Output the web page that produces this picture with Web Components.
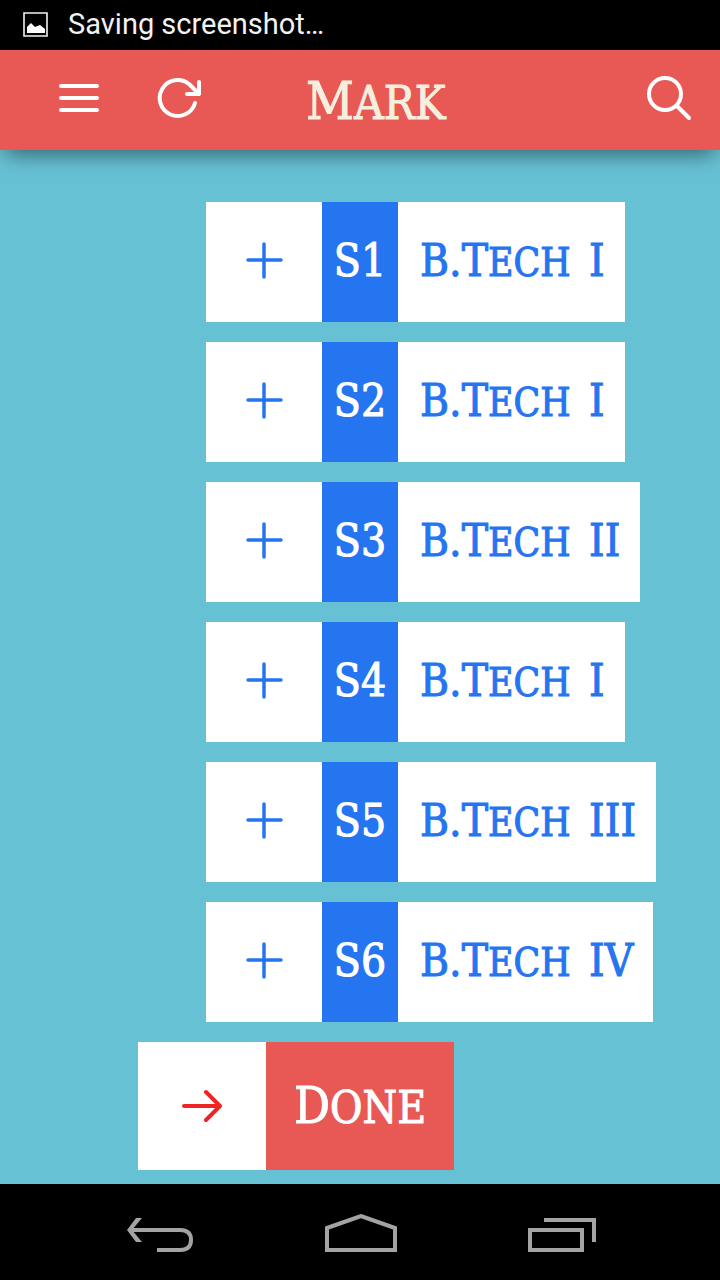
<!DOCTYPE html>
<html lang="en">
<head>
<meta charset="utf-8">
<meta name="viewport" content="width=device-width, initial-scale=1">
<title>Mark</title>
<style>
  body { margin: 0; font-family: "DejaVu Serif Condensed", "DejaVu Serif", serif; }
</style>
</head>
<body>
<mark-app></mark-app>
<script>
  const define = (name, html, setup) => {
    const template = document.createElement('template');
    template.innerHTML = html;
    customElements.define(name, class extends HTMLElement {
      constructor() {
        super();
        this.attachShadow({ mode: 'open' }).append(template.content.cloneNode(true));
      }
      connectedCallback() { if (setup) setup(this, this.shadowRoot); }
    });
  };

  const reset = `*, :host{box-sizing:border-box}
    button{margin:0;padding:0;border:0;background:none;color:inherit;font:inherit;cursor:pointer}
    svg{display:block}`;

  // Capital initials followed by slightly smaller capitals.
  define('caps-text', `
    <style>
      :host { display: inline-block; white-space: nowrap; line-height: 1; -webkit-text-stroke: 1px currentColor; }
      ::slotted(span) { font-size: 88%; text-transform: uppercase; }
    </style><slot></slot>`);

  define('status-bar', `
    <style>
      ${reset}
      :host { display: flex; align-items: center; gap: 20px; height: 50px; padding: 0 22px;
        background: #000; color: #f2f2f2; font: 29px/32px Roboto, sans-serif; }
      span { padding-bottom: 2px; }
    </style>
    <svg width="26" height="26" viewBox="0 0 26 26" aria-hidden="true">
      <path d="M2 1h23v23H2z" fill="none" stroke="#f2f2f2" stroke-width="1.6"/>
      <path d="M5 21v-6l4-4 4 4 5-2 5 4v4z" fill="#fff"/>
    </svg>
    <span><slot></slot></span>`);

  define('app-header', `
    <style>
      ${reset}
      :host { display: flex; align-items: center; height: 100px; padding: 0 28px 4px 59px;
        background: #e85955; color: #fff; position: relative;
        box-shadow: 0 10px 20px -6px rgba(0,0,0,.5); }
      button + button { margin-left: 57px; }
      h1 { flex: 1; margin: 0 0 0 104px; padding-top: 6px; color: #f4efdf; font-size: 52px; font-weight: 400; line-height: 52px; }
      svg { fill: none; stroke: #fff; stroke-width: 4; stroke-linecap: round; stroke-linejoin: round; }
    </style>
    <button aria-label="Menu"><svg width="40" height="46" viewBox="0 0 40 46"><path d="M2 11h36M2 23h36M2 35h36"/></svg></button>
    <button aria-label="Refresh"><svg width="46" height="46" viewBox="0 0 46 46"><path d="M39 28A18 18 0 1 1 33 9L43 19M43 7V19H31"/></svg></button>
    <h1><slot></slot></h1>
    <button aria-label="Search"><svg width="46" height="46" viewBox="0 0 46 46"><circle cx="19" cy="19" r="16"/><path d="M31 31l12 12"/></svg></button>`);

  define('class-row', `
    <style>
      ${reset}
      :host { display: block; }
      button { display: flex; height: 120px; background: #fff; color: #2574f0; font-size: 44px; line-height: 48px; }
      .icon, .slot { display: grid; place-items: center; align-self: stretch; }
      .icon { width: 116px; padding-bottom: 4px; }
      .slot { width: 76px; padding-bottom: 2px; background: #2574f0; color: #fff; }
      .name { align-self: center; padding: 0 20px 2px 22px; }
      .year { margin-left: 6px; font-weight: 400; }
    </style>
    <button>
      <span class="icon"><svg width="38" height="38" viewBox="0 0 38 38" fill="none" stroke="#2574f0" stroke-width="3.5" stroke-linecap="round" aria-hidden="true"><path d="M19 3v33M3 19h33"/></svg></span>
      <span class="slot"><caps-text class="semester"></caps-text></span>
      <span class="name"><caps-text>B.T<span>ech</span> <b class="year"></b></caps-text></span>
    </button>`, (host, root) => {
      root.querySelector('.semester').textContent = host.getAttribute('semester');
      root.querySelector('.year').textContent = host.getAttribute('year');
    });

  define('done-button', `
    <style>
      ${reset}
      :host { display: block; }
      button { display: flex; height: 128px; background: #fff; color: #fff; font-size: 50px; line-height: 52px; }
      .icon, .label { display: grid; place-items: center; align-self: stretch; }
      .icon { width: 128px; }
      .label { width: 188px; background: #e85955; }
    </style>
    <button>
      <span class="icon"><svg width="40" height="34" viewBox="0 0 40 34" fill="none" stroke="#f02424" stroke-width="4" stroke-linecap="round" stroke-linejoin="round" aria-hidden="true"><path d="M2 17h36M24 3l14 14-14 14"/></svg></span>
      <span class="label"><slot></slot></span>
    </button>`);

  define('nav-bar', `
    <style>
      ${reset}
      :host { display: block; background: #000; }
      nav { display: flex; justify-content: center; align-items: center; gap: 131px; height: 96px; padding: 4px 0 0 2px; }
      svg { fill: none; stroke: #a3a3a3; stroke-width: 4; }
    </style>
    <nav>
      <button aria-label="Back"><svg width="68" height="40" viewBox="0 0 68 40"><path d="M4 16H54Q65 16 65 26T54 36H31"/><path d="M10 4h6L6 16l10 12h-6L1 16z" fill="#a3a3a3" stroke="none"/></svg></button>
      <button aria-label="Home"><svg width="72" height="40" viewBox="0 0 72 40"><path d="M2 14L36 2l34 12v22H2z"/></svg></button>
      <button aria-label="Recent apps"><svg width="68" height="40" viewBox="0 0 68 40"><path d="M2 16h52v20H2zM16 6h50v22"/></svg></button>
    </nav>`);

  define('mark-app', `
    <style>
      :host { display: flex; flex-direction: column; min-height: 100vh; background: #67c1d4; }
      main { flex: 1; display: flex; flex-direction: column; align-items: flex-start; gap: 20px; padding: 52px 0 14px 138px; }
      .list { display: grid; justify-items: start; gap: 20px; margin-left: 68px; }
    </style>
    <status-bar>Saving screenshot…</status-bar>
    <app-header><caps-text>M<span>ark</span></caps-text></app-header>
    <main>
      <div class="list">
        <class-row semester="S1" year="I"></class-row>
        <class-row semester="S2" year="I"></class-row>
        <class-row semester="S3" year="II"></class-row>
        <class-row semester="S4" year="I"></class-row>
        <class-row semester="S5" year="III"></class-row>
        <class-row semester="S6" year="IV"></class-row>
      </div>
      <done-button><caps-text>D<span>one</span></caps-text></done-button>
    </main>
    <nav-bar></nav-bar>`);
</script>
</body>
</html>
